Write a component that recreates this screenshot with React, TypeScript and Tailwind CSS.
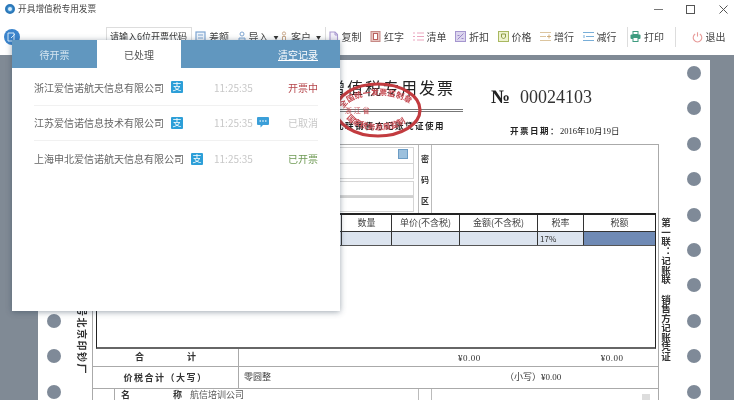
import React from 'react';

const holes = Array.from({ length: 10 }, (_, i) => i);

function HoleColumn() {
  return (
    <div className="w-[32px] shrink-0 flex flex-col items-center gap-[21.4px] pt-[6px]">
      {holes.map((i) => (
        <div key={i} className="w-[14px] h-[14px] shrink-0 rounded-full bg-[#7f8a98]" />
      ))}
    </div>
  );
}

function ToolIcon({ name }: { name: string }) {
  const cls = 'w-[11px] h-[11px] shrink-0';
  switch (name) {
    case 'diff':
      return (
        <svg viewBox="0 0 11 11" className={cls} fill="none">
          <rect x="1" y="1" width="9" height="9" stroke="#7fa6d2" strokeWidth="1.2" fill="#eef4fb" />
          <path d="M3 4h5M3 7h5" stroke="#7fa6d2" />
        </svg>
      );
    case 'import':
      return (
        <svg viewBox="0 0 8 11" className="w-[8px] h-[11px] shrink-0" fill="none">
          <circle cx="4" cy="3" r="2" stroke="#7fa6d2" />
          <path d="M1 10V7h6v3z" stroke="#7fa6d2" fill="#dce8f5" />
        </svg>
      );
    case 'client':
      return (
        <svg viewBox="0 0 8 11" className="w-[8px] h-[11px] shrink-0" fill="none">
          <circle cx="4" cy="2.5" r="1.6" stroke="#c9a88a" />
          <path d="M2.5 10V5.5h3V10" stroke="#c9a88a" />
        </svg>
      );
    case 'copy':
      return (
        <svg viewBox="0 0 11 11" className={cls} fill="none">
          <path d="M2 1h5l2.5 2.5V10H2z" stroke="#a99ad0" strokeWidth="1.1" fill="#f3f0fa" />
          <path d="M7 1v3h2.5" stroke="#a99ad0" />
        </svg>
      );
    case 'red':
      return (
        <svg viewBox="0 0 11 11" className={cls} fill="none">
          <rect x="1" y="0.5" width="9" height="10" fill="#e7c4c0" stroke="#c78a86" />
          <rect x="3.5" y="2.5" width="4" height="6" stroke="#b9625e" fill="#fff" />
        </svg>
      );
    case 'list':
      return (
        <svg viewBox="0 0 11 11" className={cls} fill="none">
          <path d="M0 2h2M4 2h7M0 5.5h2M4 5.5h7M0 9h2M4 9h7" stroke="#eba6bf" />
        </svg>
      );
    case 'discount':
      return (
        <svg viewBox="0 0 11 11" className={cls} fill="none">
          <rect x="0.5" y="0.5" width="10" height="10" fill="#dcd5ee" stroke="#a596cf" />
          <path d="M2.5 8.5l6-6M2.5 4.5h2M6.5 7.5h2" stroke="#9a88c8" />
        </svg>
      );
    case 'price':
      return (
        <svg viewBox="0 0 11 11" className={cls} fill="none">
          <rect x="0.5" y="0.5" width="10" height="10" fill="#eef3cf" stroke="#a9b860" />
          <path d="M3.5 3h4v3l-2 2-2-2z" stroke="#8d9c45" />
        </svg>
      );
    case 'addrow':
      return (
        <svg viewBox="0 0 11 11" className={cls} fill="none">
          <path d="M0 1.5h11M0 9.5h11M0 5.5h6" stroke="#dcc59f" />
          <path d="M7 5.5h4M9 3.5v4" stroke="#cfae7c" />
        </svg>
      );
    case 'delrow':
      return (
        <svg viewBox="0 0 11 11" className={cls} fill="none">
          <path d="M0 1.5h11M0 9.5h11M3 5.5h8" stroke="#78aed8" />
          <path d="M1 4v3" stroke="#78aed8" />
        </svg>
      );
    case 'print':
      return (
        <svg viewBox="0 0 11 11" className={cls}>
          <rect x="3" y="0.5" width="5" height="3" fill="#fff" stroke="#3f9c80" />
          <rect x="0.5" y="3.5" width="10" height="4.5" rx="1" fill="#3f9c80" />
          <rect x="3" y="6.5" width="5" height="4" fill="#fff" stroke="#3f9c80" />
        </svg>
      );
    default:
      return (
        <svg viewBox="0 0 14 14" className="w-[11px] h-[12px] shrink-0" fill="none">
          <path d="M4 3.2a5.5 5.5 0 1 0 6 0" stroke="#e79a98" strokeWidth="1.4" />
          <path d="M7 1v5.5" stroke="#e79a98" strokeWidth="1.4" />
        </svg>
      );
  }
}

function ToolItem({ icon, label, caret }: { icon: string; label: string; caret?: boolean }) {
  return (
    <div className="w-[42.5px] shrink-0 flex items-center gap-[3px]">
      <ToolIcon name={icon} />
      <span className="text-[10px] text-[#444] whitespace-nowrap">{label}</span>
      {caret && <span className="text-[5px] text-[#333] ml-[2px]">▼</span>}
    </div>
  );
}

function AlipayBadge() {
  return (
    <span className="w-[12px] h-[12px] shrink-0 bg-[#2d9fd8] text-white text-[9px] leading-[12px] text-center rounded-[1px]">
      支
    </span>
  );
}

function ChatIcon() {
  return (
    <svg viewBox="0 0 12 11" className="w-[12px] h-[11px]">
      <path d="M1 0h10a1 1 0 0 1 1 1v6a1 1 0 0 1-1 1H6l-2.5 2.5V8H1a1 1 0 0 1-1-1V1a1 1 0 0 1 1-1z" fill="#3b9fd9" />
      <circle cx="3.2" cy="4" r=".8" fill="#fff" />
      <circle cx="6" cy="4" r=".8" fill="#fff" />
      <circle cx="8.8" cy="4" r=".8" fill="#fff" />
    </svg>
  );
}

const records = [
  { name: '浙江爱信诺航天信息有限公司', status: '开票中', color: 'text-[#b5454a]', chat: false },
  { name: '江苏爱信诺信息技术有限公司', status: '已取消', color: 'text-[#c8c8c8]', chat: true },
  { name: '上海申北爱信诺航天信息有限公司', status: '已开票', color: 'text-[#6f9a55]', chat: false },
];

function RecordPanel() {
  return (
    <div className="absolute left-[12px] top-[40px] w-[328px] h-[271px] bg-white shadow-[0_1px_6px_rgba(40,60,80,0.45)] z-10">
      <div className="h-[28px] bg-[#6197bf] flex items-center">
        <div className="w-[85px] text-center text-[10px] text-[#d5e5f0]">待开票</div>
        <div className="w-[84px] h-full bg-white flex items-center justify-center text-[10px] text-[#555]">已处理</div>
        <div className="ml-auto mr-[22px] text-[10px] text-white underline">清空记录</div>
      </div>
      <div className="px-[22px] pt-[2px]">
        {records.map((r, i) => (
          <div
            key={r.name}
            className={`h-[35.5px] flex items-center ${i < 2 ? 'border-b border-[#f1f1f1]' : ''}`}
          >
            <div className="w-[180px] flex items-center gap-[7px]">
              <span className="text-[10px] text-[#666] whitespace-nowrap">{r.name}</span>
              <AlipayBadge />
            </div>
            <span className="w-[43px] text-[10px] text-[#c8c8c8]">11:25:35</span>
            {r.chat && <ChatIcon />}
            <span className={`ml-auto text-[10px] ${r.color}`}>{r.status}</span>
          </div>
        ))}
      </div>
    </div>
  );
}

function Stamp() {
  return (
    <svg viewBox="0 0 90 58" className="absolute left-[263px] top-[21px] w-[90px] h-[58px]">
      <defs>
        <path id="stamp-top" d="M10 31A35 17 0 0 1 80 31" />
        <path id="stamp-bottom" d="M12 31A33 18 0 0 0 78 31" />
      </defs>
      <ellipse cx="45" cy="29" rx="42" ry="26" fill="none" stroke="#c23b3f" strokeWidth="3.2" />
      <text fontSize="8" fill="#c4474f" fontWeight="700">
        <textPath href="#stamp-top" startOffset="3">全国统一发票监制章</textPath>
      </text>
      <text x="12" y="32" fontSize="7" fill="#c4474f">浙 江 省</text>
      <text fontSize="8" fill="#c4474f" fontWeight="700">
        <textPath href="#stamp-bottom" startOffset="6">国家税务总局监制</textPath>
      </text>
    </svg>
  );
}

function InvoiceHeader() {
  return (
    <div className="relative h-[84px] flex font-['Liberation_Serif','Noto_Sans_CJK_SC',serif] text-[#222]">
      <div className="ml-[220px] w-[173px] flex flex-col pt-[20px] items-end">
        <div className="pr-[8px] text-[16px] leading-[18px] tracking-[2px] whitespace-nowrap">增值税专用发票</div>
        <div className="mt-[11px] w-full h-[3px] border-y border-[#777]" />
        <div className="mt-[9px] pr-[18px] text-[8.5px] leading-[10px] tracking-[1.5px] font-bold whitespace-nowrap">
          此联销售方记账凭证使用
        </div>
      </div>
      <Stamp />
      <div className="ml-[28px] flex flex-col pt-[27px]">
        <div className="flex items-center h-[20px]">
          <span className="w-[29px] text-[19px] font-bold text-[#222]">№</span>
          <span className="text-[18px] text-[#333]">00024103</span>
        </div>
        <div className="mt-[19px] ml-[19px] text-[8.5px] leading-[10px] whitespace-nowrap text-[#222]">
          <span className="tracking-[1.5px] font-bold">开票日期：</span>2016年10月19日
        </div>
      </div>
    </div>
  );
}

function BuyerBlock() {
  return (
    <div className="h-[69px] flex border-t border-[#aaa]">
      <div className="w-[325px] shrink-0 pt-[2px] pr-[4px] flex flex-col items-stretch">
        <div className="h-[17px] border border-[#d5d5d5] flex justify-end pr-[5px] pt-[1px]">
          <div className="w-[10px] h-[10px] bg-[#9cc0dd] border border-[#6c9cc4]" />
        </div>
        <div className="h-[15px] border border-[#d5d5d5] border-t-0" />
        <div className="h-[15px] mt-[2px] border border-[#d5d5d5] flex items-center text-[9px] text-[#444]">3</div>
        <div className="h-[16px] border border-[#d5d5d5] border-t-2 border-t-[#d0d0d0]" />
      </div>
      <div className="w-[14px] shrink-0 border-x border-[#bbb] flex flex-col items-center justify-around pt-[4px] pb-[1px] text-[8px] font-bold text-[#333] font-['Liberation_Serif','Noto_Sans_CJK_SC',serif]">
        <span>密</span>
        <span>码</span>
        <span>区</span>
      </div>
      <div className="flex-1" />
    </div>
  );
}

const columns = [
  { label: '数量', w: 'w-[50px]' },
  { label: '单价(不含税)', w: 'w-[68px]' },
  { label: '金额(不含税)', w: 'w-[78px]' },
  { label: '税率', w: 'w-[46px]' },
  { label: '税额', w: 'w-[72px]' },
];

function GoodsTable() {
  return (
    <div className="ml-[3px] mr-[2px] h-[136px] border-x border-x-[#222] border-t-2 border-t-[#222] border-b-2 border-b-[#666]">
      <div className="h-[17px] flex border-b border-[#333]">
        <div className="flex-1" />
        {columns.map((c) => (
          <div key={c.label} className={`${c.w} shrink-0 border-l border-[#333] text-center text-[9px] leading-[16px] text-[#444]`}>
            {c.label}
          </div>
        ))}
      </div>
      <div className="h-[14px] flex border-b border-[#555] bg-[#dce4ef]">
        <div className="flex-1" />
        <div className="w-[50px] shrink-0 border-l border-[#333]" />
        <div className="w-[68px] shrink-0 border-l border-[#333]" />
        <div className="w-[78px] shrink-0 border-l border-[#333]" />
        <div className="w-[46px] shrink-0 border-l border-[#333] pl-[2px] text-[8px] leading-[13px] text-[#333]">17%</div>
        <div className="w-[72px] shrink-0 border-l border-[#333] bg-[#6f8ab5]" />
      </div>
    </div>
  );
}

function TotalsBlock() {
  return (
    <div className="font-['Liberation_Serif','Noto_Sans_CJK_SC',serif] text-[#333]">
      <div className="h-[18px] flex border-b border-[#aaa]">
        <div className="w-[146px] shrink-0 border-r border-[#aaa] flex items-center justify-center gap-[43px] text-[9px] font-bold">
          <span>合</span>
          <span>计</span>
        </div>
        <span className="ml-[219px] text-[9px] leading-[18px] tracking-[0.5px]">¥0.00</span>
        <span className="ml-[120px] text-[9px] leading-[18px] tracking-[0.5px]">¥0.00</span>
      </div>
      <div className="h-[22px] flex border-b border-[#aaa]">
        <div className="w-[146px] shrink-0 border-r border-[#aaa] text-center text-[9px] leading-[22px] font-bold tracking-[1.5px]">
          价税合计（大写）
        </div>
        <span className="ml-[5px] text-[9px] leading-[20px] text-[#444]">零圆整</span>
        <span className="ml-[234px] text-[9px] leading-[20px] whitespace-nowrap">（小写）¥0.00</span>
      </div>
      <div className="h-[14px] flex">
        <div className="w-[22px] shrink-0 border-r border-[#aaa]" />
        <div className="w-[303px] shrink-0 flex text-[9px] leading-[12px]">
          <span className="ml-[6px] font-bold">名</span>
          <span className="ml-[43px] font-bold">称</span>
          <span className="ml-[8px] text-[#555] whitespace-nowrap">航信培训公司</span>
        </div>
        <div className="w-[14px] shrink-0 border-x border-[#bbb]" />
        <div className="flex-1 flex justify-end pr-[8px] pt-[5px]">
          <div className="w-[8px] h-[8px] bg-[#ddd]" />
        </div>
      </div>
    </div>
  );
}

function Invoice() {
  return (
    <div className="w-[608px] shrink-0 flex flex-col">
      <InvoiceHeader />
      <div className="flex">
        <div className="w-[22px] shrink-0 pt-[162px] flex justify-center">
          <span className="[writing-mode:vertical-rl] [text-orientation:sideways] text-[10px] tracking-[1.5px] font-bold text-[#333] whitespace-nowrap font-['Liberation_Serif','Noto_Sans_CJK_SC',serif]">
            号北京印钞厂
          </span>
        </div>
        <div className="w-[567px] shrink-0 border-x border-[#aaa]">
          <BuyerBlock />
          <GoodsTable />
          <TotalsBlock />
        </div>
        <div className="flex-1 pt-[74px] flex justify-start">
          <span className="[writing-mode:vertical-rl] [text-orientation:upright] text-[9.5px] leading-[12px] font-bold text-[#333] whitespace-nowrap font-['Liberation_Serif','Noto_Sans_CJK_SC',serif]">
            第一联：记账联 销售方记账凭证
          </span>
        </div>
      </div>
    </div>
  );
}

export default function App() {
  return (
    <div className="relative w-[734px] h-[400px] overflow-hidden bg-white flex flex-col font-['Noto_Sans_CJK_SC','Liberation_Sans',sans-serif] blur-[0.4px]">
      {/* Title bar */}
      <div className="h-[18px] shrink-0 flex items-center pl-[5px] gap-[3px]">
        <div className="w-[10px] h-[10px] rounded-full bg-[#3d8fd0] border-2 border-[#2c78b8] flex items-center justify-center">
          <div className="w-[4px] h-[4px] rounded-full bg-[#d9ecf8]" />
        </div>
        <span className="text-[8.7px] text-[#444]">开具增值税专用发票</span>
        <div className="ml-auto flex items-center">
          <div className="w-[9px] h-px bg-[#777] mr-[23px]" />
          <div className="w-[9px] h-[9px] border border-[#555] mr-[24px]" />
          <svg viewBox="0 0 9 9" className="w-[9px] h-[9px] mr-[6px]" stroke="#555">
            <path d="M0.5 0.5l8 8M8.5 0.5l-8 8" />
          </svg>
        </div>
      </div>

      {/* Toolbar */}
      <div className="h-[37px] shrink-0 flex items-center pl-[4px]">
        <div className="w-[16px] h-[16px] shrink-0 rounded-full bg-[#3b84cc] flex items-center justify-center">
          <svg viewBox="0 0 10 10" className="w-[10px] h-[10px]" fill="none" stroke="#d6e8f7">
            <path d="M1 1h6v8H1zM4 6l4-4" />
          </svg>
        </div>
        <div className="ml-[86px] w-[86px] h-[20px] shrink-0 border border-[#ddd] pl-[3px] text-[9px] leading-[18px] text-[#333] whitespace-nowrap">
          请输入6位开票代码
        </div>
        <div className="w-[3px] shrink-0" />
        <ToolItem icon="diff" label="差额" />
        <ToolItem icon="import" label="导入" caret />
        <ToolItem icon="client" label="客户" caret />
        <div className="w-px h-[20px] mx-[2px] shrink-0 bg-[#ddd]" />
        <ToolItem icon="copy" label="复制" />
        <ToolItem icon="red" label="红字" />
        <ToolItem icon="list" label="清单" />
        <ToolItem icon="discount" label="折扣" />
        <ToolItem icon="price" label="价格" />
        <ToolItem icon="addrow" label="增行" />
        <ToolItem icon="delrow" label="减行" />
        <div className="w-px h-[20px] mx-[2px] shrink-0 bg-[#ddd]" />
        <ToolItem icon="print" label="打印" />
        <div className="w-px h-[20px] mx-[2px] shrink-0 bg-[#ddd]" />
        <div className="ml-[14px] flex items-center gap-[3px]">
          <ToolIcon name="power" />
          <span className="text-[10px] text-[#444] whitespace-nowrap">退出</span>
        </div>
      </div>

      {/* Invoice workspace */}
      <div className="flex-1 min-h-0 bg-[#808a95] pt-[5px] pl-[38px] pr-[24px] overflow-hidden">
        <div className="h-[400px] bg-white flex">
          <HoleColumn />
          <Invoice />
          <HoleColumn />
        </div>
      </div>

      <RecordPanel />
    </div>
  );
}
